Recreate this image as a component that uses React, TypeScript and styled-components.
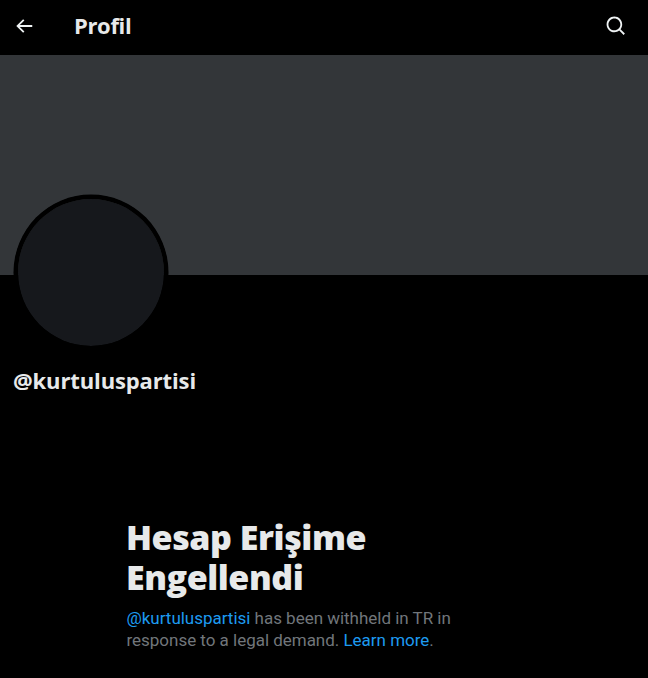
import React from 'react';
import styled, { createGlobalStyle } from 'styled-components';

const GlobalStyle = createGlobalStyle`
  * {
    box-sizing: border-box;
  }

  body {
    margin: 0;
    background-color: #000;
    color: #e7e9ea;
    font-family: 'Open Sans', 'Noto Sans', sans-serif;
  }
`;

const Wrapper = styled.div`
  min-height: 678px;
  overflow: hidden;
`;

const TopBar = styled.header`
  display: flex;
  align-items: center;
  height: 55px;
  padding: 0 21px 3px 13px;

  h2 {
    flex: 1;
    margin: -2px 0 0 39px;
    font-size: 22px;
    font-weight: 700;
    line-height: 28px;
    letter-spacing: -0.35px;
  }
`;

const IconButton = styled.button`
  display: flex;
  padding: 0;
  border: none;
  background: none;
  color: #eff3f4;
  cursor: pointer;

  svg {
    width: 22px;
    height: 22px;
    fill: currentColor;
  }
`;

const Banner = styled.div`
  height: 220px;
  background-color: #333639;
`;

const ProfileInfo = styled.section`
  padding: 0 13px;
`;

const Avatar = styled.div`
  width: 154px;
  height: 155px;
  margin: -80px 0 0 1px;
  border: 4px solid #000;
  border-radius: 50%;
  background-color: #16181c;
  background-clip: padding-box;
  box-shadow: 0 0 0 0.5px #000;
`;

const UserName = styled.h2`
  margin: 16px 0 0;
  font-size: 22px;
  font-weight: 700;
  line-height: 28px;
  letter-spacing: -0.13px;
`;

const Notice = styled.section`
  width: 350px;
  margin: 123px 0 0 126px;

  h1 {
    margin: 0;
    font-size: 34px;
    font-weight: 800;
    line-height: 40px;
    letter-spacing: -0.45px;
  }

  p {
    margin: 10px 0 0 0.5px;
    color: #71767b;
    font-family: Roboto, sans-serif;
    font-size: 17px;
    line-height: 22px;
    letter-spacing: -0.02px;
  }

  a {
    color: #1d9bf0;
    text-decoration: none;
  }
`;

const App = () => (
  <Wrapper>
    <GlobalStyle />
    <TopBar>
      <IconButton aria-label="Geri">
        <svg viewBox="0 0 24 24">
          <path d="M7.414 13l5.043 5.04-1.414 1.42L3.586 12l7.457-7.46 1.414 1.42L7.414 11H21v2H7.414z" />
        </svg>
      </IconButton>
      <h2>Profil</h2>
      <IconButton aria-label="Ara">
        <svg viewBox="0 0 24 24">
          <path d="M10.25 3.75c-3.59 0-6.5 2.91-6.5 6.5s2.91 6.5 6.5 6.5c1.795 0 3.419-.726 4.596-1.904 1.178-1.177 1.904-2.801 1.904-4.596 0-3.59-2.91-6.5-6.5-6.5zm-8.5 6.5c0-4.694 3.806-8.5 8.5-8.5s8.5 3.806 8.5 8.5c0 1.986-.682 3.815-1.824 5.262l4.781 4.781-1.414 1.414-4.781-4.781c-1.447 1.142-3.276 1.824-5.262 1.824-4.694 0-8.5-3.806-8.5-8.5z" />
        </svg>
      </IconButton>
    </TopBar>
    <Banner />
    <ProfileInfo>
      <Avatar />
      <UserName>@kurtuluspartisi</UserName>
    </ProfileInfo>
    <Notice>
      <h1>
        Hesap Erişime
        <br />
        Engellendi
      </h1>
      <p>
        <a href="#profile">@kurtuluspartisi</a> has been withheld in TR in
        <br />
        response to a legal demand. <a href="#more">Learn more</a>.
      </p>
    </Notice>
  </Wrapper>
);

export default App;
